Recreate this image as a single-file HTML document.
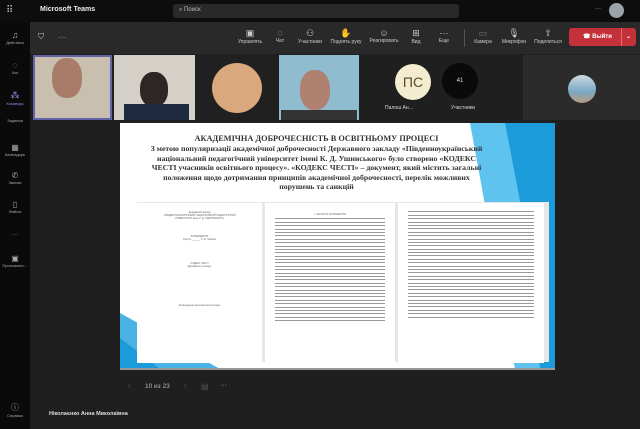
<!DOCTYPE html>
<html><head><meta charset="utf-8"><style>
*{margin:0;padding:0;box-sizing:border-box}
body{width:640px;height:429px;overflow:hidden;background:#1f1f1f;font-family:"Liberation Sans",sans-serif;color:#ddd;position:relative}
.a{position:absolute}
.tb{font-size:5px;color:#ccc;text-align:center}
.doc{background:#fff;position:absolute}
.ln{height:1px;background:#999;margin:2.4px 0}
.t{font-family:"Liberation Serif",serif;color:#333;font-weight:bold}
</style></head><body>
<div class="a" style="left:0;top:0;width:640px;height:22px;background:#0d0d0d"></div>
<div class="a" style="left:6px;top:5px;font-size:10px;color:#bbb;letter-spacing:1px">⠿</div>
<div class="a" style="left:40px;top:6px;font-size:7px;color:#eee;font-weight:bold">Microsoft Teams</div>
<div class="a" style="left:173px;top:4px;width:286px;height:14px;background:#292929;border-radius:3px;font-size:6px;color:#bbb;padding:3px 0 0 6px">⌕ Поиск</div>
<div class="a" style="left:595px;top:6px;font-size:6px;color:#ccc">···</div>
<div class="a" style="left:609px;top:3px;width:15px;height:15px;border-radius:50%;background:#9aa4aa"></div>
<div class="a" style="left:0;top:22px;width:30px;height:407px;background:#0a0a0a"></div>
<div class="a tb" style="left:0;top:30px;width:30px;font-size:4px;color:#aaa"><div style="font-size:9px">♫</div>Действия</div>
<div class="a tb" style="left:0;top:60px;width:30px;font-size:4px;color:#aaa"><div style="font-size:9px">◌</div>Чат</div>
<div class="a tb" style="left:0;top:90px;width:30px;font-size:4px;color:#8b8fe0"><div style="font-size:9px">⁂</div>Команды</div>
<div class="a tb" style="left:0;top:118px;width:30px;font-size:4px;color:#aaa">Задания</div>
<div class="a tb" style="left:0;top:143px;width:30px;font-size:4px;color:#aaa"><div style="font-size:8px">▦</div>Календарь</div>
<div class="a tb" style="left:0;top:171px;width:30px;font-size:4px;color:#aaa"><div style="font-size:8px">✆</div>Звонки</div>
<div class="a tb" style="left:0;top:200px;width:30px;font-size:4px;color:#aaa"><div style="font-size:8px">▯</div>Файлы</div>
<div class="a tb" style="left:0;top:232px;width:30px;font-size:6px;color:#aaa">···</div>
<div class="a tb" style="left:0;top:254px;width:30px;font-size:4px;color:#aaa"><div style="font-size:8px">▣</div>Приложени…</div>
<div class="a tb" style="left:0;top:402px;width:30px;font-size:4px;color:#aaa"><div style="font-size:8px">ⓘ</div>Справка</div>
<div class="a" style="left:30px;top:22px;width:610px;height:32px;background:#292929"></div>
<div class="a" style="left:38px;top:32px;font-size:8px;color:#ccc">⛉</div>
<div class="a" style="left:58px;top:35px;font-size:5px;color:#999">--:--</div>
<div class="a tb" style="left:232px;top:28px;width:36px"><div style="font-size:9px">▣</div>Управлять</div>
<div class="a tb" style="left:270px;top:28px;width:20px"><div style="font-size:9px">◌</div>Чат</div>
<div class="a tb" style="left:294px;top:28px;width:32px"><div style="font-size:9px">⚇</div>Участники</div>
<div class="a tb" style="left:326px;top:28px;width:40px"><div style="font-size:9px">✋</div>Поднять руку</div>
<div class="a tb" style="left:366px;top:28px;width:36px"><div style="font-size:9px">☺</div>Реагировать</div>
<div class="a tb" style="left:406px;top:28px;width:20px"><div style="font-size:9px">⊞</div>Вид</div>
<div class="a tb" style="left:434px;top:28px;width:20px"><div style="font-size:9px">···</div>Еще</div>
<div class="a" style="left:464px;top:29px;width:1px;height:18px;background:#555"></div>
<div class="a tb" style="left:470px;top:28px;width:26px"><div style="font-size:9px;color:#777">▭</div>Камера</div>
<div class="a tb" style="left:498px;top:28px;width:32px"><div style="font-size:9px">🎙</div>Микрофон</div>
<div class="a tb" style="left:530px;top:28px;width:36px"><div style="font-size:9px">⇧</div>Поделиться</div>
<div class="a" style="left:569px;top:28px;width:67px;height:18px;background:#c4313b;border-radius:3px;font-size:6px;color:#fff;font-weight:bold;padding:5px 0 0 14px">☎ Выйти<span style="position:absolute;left:52px;top:0;height:18px;border-left:1px solid #e66;padding:5px 0 0 4px">⌄</span></div>
<div class="a" style="left:33px;top:55px;width:79px;height:65px;background:#c8bfae;border:2px solid #6264a7"></div>
<div class="a" style="left:52px;top:58px;width:30px;height:40px;border-radius:45%;background:#a87c68"></div>
<div class="a" style="left:114px;top:55px;width:81px;height:65px;background:#d4d0c8"></div>
<div class="a" style="left:140px;top:72px;width:28px;height:35px;border-radius:45%;background:#2c2624"></div>
<div class="a" style="left:124px;top:104px;width:65px;height:16px;background:#1e2a40"></div>
<div class="a" style="left:197px;top:55px;width:80px;height:65px;background:#202020"></div>
<div class="a" style="left:212px;top:63px;width:50px;height:50px;border-radius:50%;background:#d9a87c"></div>
<div class="a" style="left:279px;top:55px;width:80px;height:65px;background:#8fbccf"></div>
<div class="a" style="left:300px;top:70px;width:30px;height:40px;border-radius:45%;background:#b08070"></div>
<div class="a" style="left:281px;top:110px;width:76px;height:10px;background:#333"></div>
<div class="a" style="left:395px;top:64px;width:36px;height:36px;border-radius:50%;background:#f3ecd0;color:#5a4a22;font-size:14px;text-align:center;line-height:36px">ПС</div>
<div class="a" style="left:385px;top:105px;font-size:5px;color:#ddd">Палош Ан…</div>
<div class="a" style="left:442px;top:63px;width:36px;height:36px;border-radius:50%;background:#0a0a0a;color:#ddd;font-size:6px;text-align:center;line-height:36px">41</div>
<div class="a" style="left:451px;top:105px;font-size:5px;color:#ddd">Участники</div>
<div class="a" style="left:523px;top:55px;width:117px;height:65px;background:#2b2b2b"></div>
<div class="a" style="left:568px;top:75px;width:28px;height:28px;border-radius:50%;background:linear-gradient(#cdd9e0,#7ba8c4 60%,#b89a80)"></div>
<!-- slide -->
<div class="a" style="left:120px;top:123px;width:435px;height:246px;background:#fff;overflow:hidden">
 <svg class="a" style="left:0;top:0" width="435" height="246">
  <polygon points="350,0 435,0 435,246 395,246" fill="#5ec3ee"/>
  <polygon points="385,0 435,0 435,246 420,246 410,130" fill="#1b9bd9"/>
  <polygon points="0,190 0,246 100,246" fill="#4ab2e4"/>
  <polygon points="0,215 0,246 40,246" fill="#1b9bd9"/>
 </svg>
 <div class="a" style="left:-21px;top:5px;width:435px;text-align:center"><span class="t" style="font-size:8.3px">АКАДЕМІЧНА ДОБРОЧЕСНІСТЬ В ОСВІТНЬОМУ ПРОЦЕСІ</span></div>
 <div class="a t" style="left:-21px;top:21px;width:435px;text-align:center;font-size:7.8px;line-height:9.6px;white-space:nowrap">З метою популяризації академічної доброчесності Державного закладу «Південноукраїнський<br>національний педагогічний університет імені К. Д. Ушинського» було створено «КОДЕКС<br>ЧЕСТІ учасників освітнього процесу». «КОДЕКС ЧЕСТІ» – документ, який містить загальні<br>положення щодо дотримання принципів академічної доброчесності, перелік можливих<br>порушень та санкцій</div>
 <div class="a" style="left:17px;top:79px;width:412px;height:160px;background:#e6e6e6"></div>
 <div class="doc" style="left:17px;top:80px;width:125px;height:160px;font-size:2.5px;color:#666;text-align:center;padding-top:8px">Державний заклад<br>«ПІВДЕННОУКРАЇНСЬКИЙ НАЦІОНАЛЬНИЙ ПЕДАГОГІЧНИЙ<br>УНІВЕРСИТЕТ імені К. Д. УШИНСЬКОГО»<br><br><br><br><br><br>ЗАТВЕРДЖУЮ<br>Ректор ______ А. В. Чебикін<br><br><br><br><br><br><br><br>КОДЕКС ЧЕСТІ<br>Державного закладу<br><br><br><br><br><br><br><br><br><br><br><br><br>Затверджено рішенням вченої ради</div>
 <div class="doc" style="left:145px;top:80px;width:130px;height:160px;padding:10px 10px">
  <div style="font-size:2.5px;color:#666;text-align:center">I. ЗАГАЛЬНІ ПОЛОЖЕННЯ</div>
  <div class="ln"></div><div class="ln"></div><div class="ln"></div><div class="ln"></div><div class="ln"></div><div class="ln"></div><div class="ln"></div><div class="ln"></div><div class="ln"></div><div class="ln"></div><div class="ln"></div><div class="ln"></div><div class="ln"></div><div class="ln"></div><div class="ln"></div><div class="ln"></div><div class="ln"></div><div class="ln"></div><div class="ln"></div><div class="ln"></div><div class="ln"></div><div class="ln"></div><div class="ln"></div><div class="ln"></div><div class="ln"></div><div class="ln"></div><div class="ln"></div><div class="ln"></div><div class="ln"></div><div class="ln"></div><div class="ln"></div>
 </div>
 <div class="doc" style="left:278px;top:80px;width:146px;height:160px;padding:6px 10px">
  <div class="ln"></div><div class="ln"></div><div class="ln"></div><div class="ln"></div><div class="ln"></div><div class="ln"></div><div class="ln"></div><div class="ln"></div><div class="ln"></div><div class="ln"></div><div class="ln"></div><div class="ln"></div><div class="ln"></div><div class="ln"></div><div class="ln"></div><div class="ln"></div><div class="ln"></div><div class="ln"></div><div class="ln"></div><div class="ln"></div><div class="ln"></div><div class="ln"></div><div class="ln"></div><div class="ln"></div><div class="ln"></div><div class="ln"></div><div class="ln"></div><div class="ln"></div><div class="ln"></div><div class="ln"></div><div class="ln"></div><div class="ln"></div>
 </div>
</div>
<div class="a" style="left:120px;top:368px;width:435px;height:2px;background:#999"></div>
<div class="a" style="left:128px;top:381px;font-size:8px;color:#555">‹</div>
<div class="a" style="left:145px;top:383px;font-size:6.5px;color:#bbb">10 из 23</div>
<div class="a" style="left:184px;top:381px;font-size:8px;color:#555">›</div>
<div class="a" style="left:201px;top:382px;font-size:8px;color:#555">▤</div>
<div class="a" style="left:220px;top:382px;font-size:7px;color:#bbb">···</div>
<div class="a" style="left:49px;top:411px;font-size:5.5px;color:#ddd;font-weight:bold">Ніколаєнко Анна Миколаївна</div>
</body></html>
